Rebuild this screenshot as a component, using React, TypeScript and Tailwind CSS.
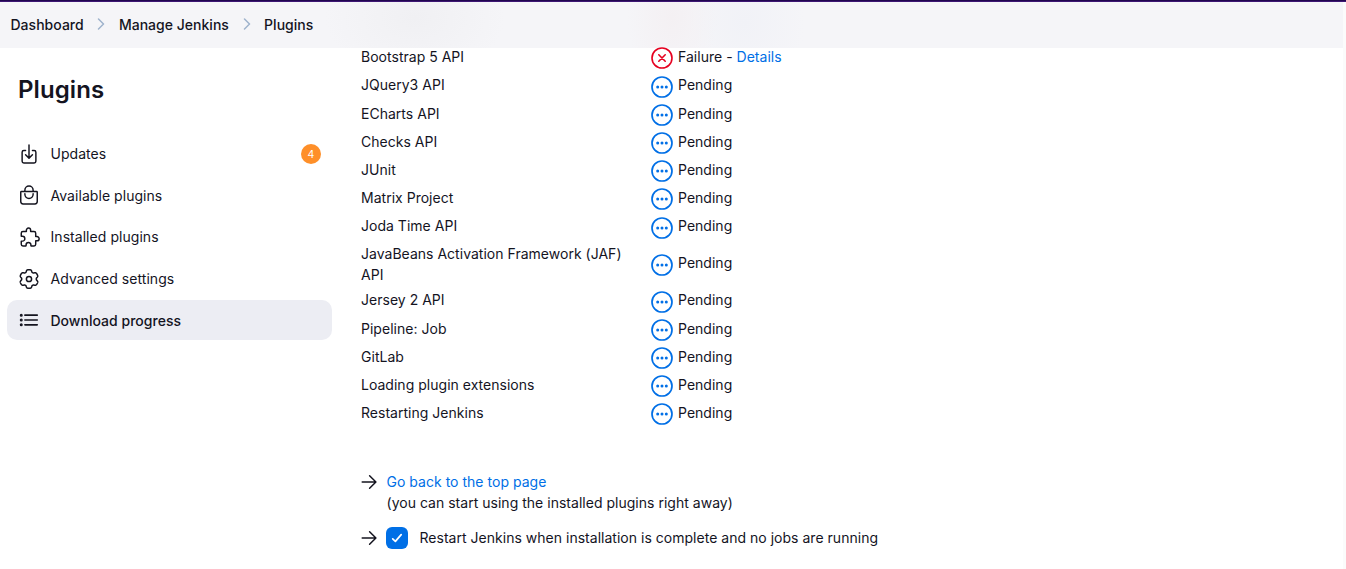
import React from "react";

type IconProps = { className?: string; children: React.ReactNode; strokeWidth?: number };

function Ion({ className = "", children, strokeWidth = 34 }: IconProps) {
  return (
    <svg viewBox="0 0 512 512" className={`shrink-0 ${className}`} fill="none" stroke="currentColor" strokeWidth={strokeWidth} strokeLinecap="round" strokeLinejoin="round">
      {children}
    </svg>
  );
}

// Six broad, rounded lobes with narrow notches between them.
const gearPath =
  Array.from({ length: 180 }, (_, i) => {
    const a = (i * Math.PI) / 90;
    const r = 8.2 + 1.15 * Math.tanh(1.8 * Math.cos(6 * (a - Math.PI / 2)) + 0.7);
    return `${i ? "L" : "M"}${(11 + r * Math.cos(a)).toFixed(2)} ${(11 + r * Math.sin(a)).toFixed(2)}`;
  }).join("") + "Z";

function Gear() {
  return (
    <svg viewBox="0 0 22 22" className="size-[22px] shrink-0" fill="none" stroke="currentColor" strokeWidth="1.5" strokeLinejoin="round">
      <path d={gearPath} />
      <circle cx="11" cy="11" r="2.6" />
    </svg>
  );
}

const tasks = [
  {
    label: "Updates",
    badge: "4",
    icon: (
      <Ion className="size-[22px]">
        <path d="M336 176h40a40 40 0 0140 40v208a40 40 0 01-40 40H136a40 40 0 01-40-40V216a40 40 0 0140-40h40" />
        <path d="M176 272l80 80 80-80M256 48v288" />
      </Ion>
    ),
  },
  {
    label: "Available plugins",
    icon: (
      <Ion className="size-[22px]">
        <path d="M80 176a16 16 0 00-16 16v216c0 30.24 25.76 56 56 56h272c30.24 0 56-24.51 56-54.75V192a16 16 0 00-16-16zM160 176v-32a96 96 0 0196-96h0a96 96 0 0196 96v32" />
        <path d="M160 224v16a96 96 0 0096 96h0a96 96 0 0096-96v-16" />
      </Ion>
    ),
  },
  {
    label: "Installed plugins",
    icon: (
      <Ion className="size-[22px]">
        <path transform="translate(28 0)" d="M413.66 246.1H386a2 2 0 01-2-2v-77.24A38.86 38.86 0 00345.14 128H267.9a2 2 0 01-2-2V98.34c0-27.14-21.5-49.86-48.64-50.33a49.53 49.53 0 00-50.4 49.51V126a2 2 0 01-2 2H87.62A39.74 39.74 0 0048 167.62V238a2 2 0 002 2h26.91c29.37 0 53.68 25.48 54.09 54.85.42 29.87-23.51 57.15-53.29 57.15H50a2 2 0 00-2 2v70.38A39.74 39.74 0 0087.62 464H158a2 2 0 002-2v-20.93c0-30.28 24.75-56.35 55-57.06 30.1-.7 57 20.31 57 50.28V462a2 2 0 002 2h71.14A38.86 38.86 0 00384 425.14v-78a2 2 0 012-2h28.48c27.63 0 49.52-22.67 49.52-50.4s-23.2-48.64-50.34-48.64z" />
      </Ion>
    ),
  },
  { label: "Advanced settings", icon: <Gear /> },
  {
    label: "Download progress",
    active: true,
    icon: (
      <Ion className="size-[22px]" strokeWidth={38}>
        <path d="M160 144h288M160 256h288M160 368h288" />
        <circle cx="76" cy="144" r="16" />
        <circle cx="76" cy="256" r="16" />
        <circle cx="76" cy="368" r="16" />
      </Ion>
    ),
  },
];

const plugins: { name: string; failed?: boolean; tall?: boolean }[] = [
  { name: "Bootstrap 5 API", failed: true },
  { name: "JQuery3 API" },
  { name: "ECharts API" },
  { name: "Checks API" },
  { name: "JUnit" },
  { name: "Matrix Project" },
  { name: "Joda Time API" },
  { name: "JavaBeans Activation Framework (JAF) API", tall: true },
  { name: "Jersey 2 API" },
  { name: "Pipeline: Job" },
  { name: "GitLab" },
  { name: "Loading plugin extensions" },
  { name: "Restarting Jenkins" },
];

function StatusIcon({ failed }: { failed?: boolean }) {
  return failed ? (
    <svg viewBox="0 0 22 22" className="mt-[3.5px] size-[22px] shrink-0 text-[#e6001f]" fill="none" stroke="currentColor" strokeWidth="1.6" strokeLinecap="round">
      <circle cx="11" cy="11" r="10" />
      <path d="M7.8 7.8l6.4 6.4M14.2 7.8l-6.4 6.4" />
    </svg>
  ) : (
    <svg viewBox="0 0 22 22" className="mt-[3.8px] size-[22px] shrink-0 text-[#006fe6]" fill="none" stroke="currentColor" strokeWidth="1.7">
      <circle cx="11" cy="11" r="10" />
      <g fill="currentColor" stroke="none">
        <circle cx="6.7" cy="11" r="1.5" />
        <circle cx="11" cy="11" r="1.5" />
        <circle cx="15.3" cy="11" r="1.5" />
      </g>
    </svg>
  );
}

function Arrow() {
  return (
    <svg viewBox="0 0 22 22" className="size-[22px] shrink-0" fill="none" stroke="currentColor" strokeWidth="1.5" strokeLinecap="round" strokeLinejoin="round">
      <path d="M11.6 4.7L17.9 11l-6.3 6.3M17.4 11H4.2" />
    </svg>
  );
}

function Chevron() {
  return (
    <svg viewBox="0 0 8 12" className="h-3 w-2 shrink-0 text-[#9fb3cc]" fill="none" stroke="currentColor" strokeWidth="1.5" strokeLinecap="round" strokeLinejoin="round">
      <path d="M1.5 1l5 5-5 5" />
    </svg>
  );
}

export default function App() {
  return (
    <div className="flex h-[569px] overflow-hidden bg-white font-['Inter',sans-serif] text-[14px] leading-[21px] tracking-[0.02px] text-[#14141f]">
      <div className="flex min-w-0 flex-1 flex-col">
        <div className="-mr-[3px] h-[2px] shrink-0 border-b border-[#3d1673] bg-[#20064f]" />
        <header className="flex h-[46px] shrink-0 items-center bg-[#f5f5f8] bg-[radial-gradient(ellipse_90px_60px_at_415px_16px,#f0f0f3,transparent),radial-gradient(ellipse_45px_70px_at_672px_16px,#f4f0f3,transparent),radial-gradient(ellipse_60px_70px_at_745px_20px,#f1f2f7,transparent)] pb-[2px] pl-[10.5px] font-medium">
          <span>Dashboard</span>
          <span className="mx-[13.6px] flex"><Chevron /></span>
          <span>Manage Jenkins</span>
          <span className="mx-[13.6px] flex"><Chevron /></span>
          <span>Plugins</span>
        </header>
        <div className="flex min-h-0 flex-1">
          <aside className="w-[332px] shrink-0 pl-[7px]">
            <h1 className="mt-[24px] pl-[11px] text-[24px] font-semibold leading-9 tracking-[0.1px]">Plugins</h1>
            <nav className="mt-[25.5px] flex flex-col gap-[1.7px]">
              {tasks.map((t) => (
                <a key={t.label} className={`flex h-10 items-center rounded-[10px] pl-[11px] pr-[11px] ${t.active ? "bg-[#ecedf3] font-medium" : "tracking-[0.05px]"}`}>
                  {t.icon}
                  <span className="ml-[10.5px] flex-1">{t.label}</span>
                  {t.badge && (
                    <span className="flex size-5 items-center justify-center rounded-full bg-[#fe8f29] pt-px text-[10.5px] text-white">{t.badge}</span>
                  )}
                </a>
              ))}
            </nav>
          </aside>
          <main className="ml-[29px] flex-1">
            <div className="-mt-[5.4px] w-[600px]">
              {plugins.map((p) => (
                <div key={p.name} className={`flex items-center ${p.tall ? "h-[46px]" : "h-[28.18px]"}`}>
                  <span className={`w-[290px] shrink-0 pr-5 ${p.tall ? "pt-[2px]" : ""}`}>{p.name}</span>
                  <StatusIcon failed={p.failed} />
                  <span className="ml-[5px]">
                    {p.failed ? (
                      <>
                        Failure - <a className="text-[#006fe6]">Details</a>
                      </>
                    ) : (
                      "Pending"
                    )}
                  </span>
                </div>
              ))}
            </div>
            <div className="mt-[44.5px] flex items-start">
              <span className="-ml-[3px] flex"><Arrow /></span>
              <p className="ml-[6.5px]">
                <a className="text-[#006fe6]">Go back to the top page</a>
                <br />
                (you can start using the installed plugins right away)
              </p>
            </div>
            <div className="mt-[13.5px] flex items-center">
              <span className="-ml-[3px] flex"><Arrow /></span>
              <span className="ml-[6px] flex size-[22px] items-center justify-center rounded-[6px] bg-[#006fe6] text-white">
                <svg viewBox="0 0 12 12" className="size-3" fill="none" stroke="currentColor" strokeWidth="1.7" strokeLinecap="round" strokeLinejoin="round">
                  <path d="M1.7 6.8L4.4 9.4 10.2 2.6" />
                </svg>
              </span>
              <span className="ml-[11.5px]">Restart Jenkins when installation is complete and no jobs are running</span>
            </div>
          </main>
        </div>
      </div>
      <div className="mt-[2px] w-[3px] shrink-0 bg-[#fbfbfb]" />
    </div>
  );
}
